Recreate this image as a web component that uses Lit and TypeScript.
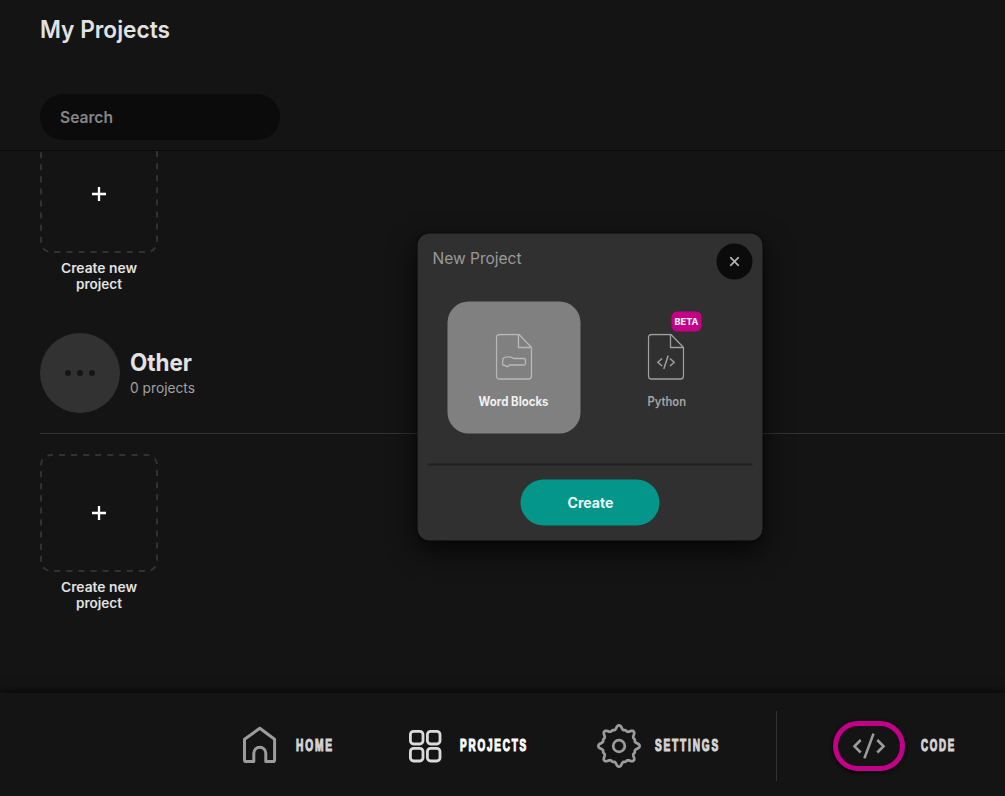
import { LitElement, html, css, svg } from "lit";
import { customElement, property } from "lit/decorators.js";

@customElement("fit-text")
class FitText extends LitElement {
  @property() text = "";
  @property({ type: Number }) width = 50;
  @property({ type: Number }) size = 16;
  @property({ type: Number }) weight = 400;
  static styles = css`
    :host { display: block; }
    svg { display: block; overflow: visible; }
    text { fill: currentColor; }
  `;
  render() {
    return html`<svg width=${this.width} height=${this.size}>
      <text x="0" y=${this.size * 0.86} font-size=${this.size} font-weight=${this.weight}
        textLength=${this.width} lengthAdjust="spacingAndGlyphs">${this.text}</text>
    </svg>`;
  }
}

@customElement("new-card")
class NewCard extends LitElement {
  static styles = css`
    :host { display: flex; flex-direction: column; width: 118px; }
    svg { display: block; }
    .label { display: flex; flex-direction: column; align-items: center; margin-top: 9px; gap: 3px; color: #e2e2e2; }
  `;
  render() {
    return html`
      <svg width="118" height="118" viewBox="0 0 118 118" fill="none">
        <rect x="1" y="1" width="116" height="116" rx="10" stroke="#323232" stroke-width="2" stroke-dasharray="6.038 6.038" stroke-dashoffset="-8" />
        <path d="M59 52V66M52 59H66" stroke="#fff" stroke-width="2.3" />
      </svg>
      <div class="label">
        <fit-text text="Create new" .width=${76} .size=${13} .weight=${600}></fit-text>
        <fit-text text="project" .width=${46} .size=${13} .weight=${600}></fit-text>
      </div>
    `;
  }
}

const fileOutline = svg`
  <path d="M4.5 1H23.5L36 14V42.5Q36 45.5 33 45.5H4Q1 45.5 1 42.5V4Q1 1 4.5 1Z" />
  <path d="M23 1V14H36" />`;

const gearPath = (() => {
  const pts: string[] = [];
  for (let deg = 0; deg < 360; deg += 1.5) {
    const off = ((deg + 22.5) % 45) - 22.5;
    const r = 16.3 + 4.3 * Math.exp(-Math.pow(Math.abs(off) / 9.5, 2.6)) + 0.7 * Math.exp(-Math.pow((22.5 - Math.abs(off)) / 5, 2));
    const t = (deg * Math.PI) / 180;
    pts.push(`${(22 + r * Math.cos(t)).toFixed(2)} ${(22 + r * Math.sin(t)).toFixed(2)}`);
  }
  return "M" + pts.join("L") + "Z";
})();

@customElement("app-root")
class AppRoot extends LitElement {
  static styles = css`
    :host {
      display: flex; flex-direction: column; position: relative; width: 100%; height: 796px;
      overflow: hidden; background: #141414; color: #e2e2e2; font-family: Inter, sans-serif;
    }
    svg { display: block; flex: none; }
    header { box-sizing: border-box; height: 151px; padding: 17px 0 0 40px; border-bottom: 1px solid #0b0b0b; flex: none; }
    .search {
      box-sizing: border-box; width: 240px; height: 46px; border-radius: 23px; background: #0b0b0b;
      margin-top: 53px; padding-left: 20px; display: flex; align-items: center; color: #868686;
    }
    main { flex: 1; min-height: 0; overflow: hidden; padding-left: 40px; }
    .list { margin-top: -16px; }
    .group { display: flex; align-items: center; gap: 10px; height: 80px; padding-bottom: 20px; margin: 42px 0 20px; border-bottom: 1px solid #323232; }
    .avatar { width: 80px; height: 80px; border-radius: 50%; background: #323232; display: flex; align-items: center; justify-content: center; gap: 6px; }
    .dot { width: 6px; height: 6px; border-radius: 50%; background: #151515; }
    .names { display: flex; flex-direction: column; gap: 7px; margin-top: -2px; }
    .sub { color: #a0a0a0; }
    nav {
      flex: none; box-sizing: border-box; height: 103px; background: #141414; box-shadow: 0 0 10px #000;
      display: flex; align-items: center; padding: 3px 0 0 242px; color: #dadada; z-index: 1;
    }
    .item { display: flex; align-items: center; color: #d5d5d5; }
    .item.on { color: #fff; }
    .item.home { gap: 18px; margin-right: 75px; }
    .item.home svg { margin-top: -2px; }
    .item.proj { gap: 18px; margin-right: 69px; }
    .item.set { gap: 14px; margin-right: 56px; }
    .item.code { gap: 16px; margin-left: 56px; }
    .bar { width: 1px; height: 70px; background: #323232; }
    .pill { box-sizing: border-box; width: 72px; height: 50px; border: 5px solid #c40088; border-radius: 25px; display: grid; place-items: center; box-shadow: 0 1px 4px #000; }
    .modal {
      position: absolute; z-index: 2; left: 418px; top: 234px; box-sizing: border-box; width: 345px; height: 307px;
      border-radius: 12px; background: #303030; box-shadow: 0 10px 28px #000b, 0 0 2px #0008; transform: translate(-0.5px, -0.5px);
      display: flex; flex-direction: column; padding: 9.5px 10px 15px;
    }
    .top { display: flex; justify-content: space-between; padding-left: 5px; color: #9a9a9a; }
    .title { padding-top: 7px; }
    .close { width: 36.5px; height: 36.5px; border-radius: 50%; background: #0b0b0b; display: grid; place-items: center; }
    .choices { display: flex; gap: 20px; padding: 22px 20px 0; }
    .choice { position: relative; width: 133px; height: 132px; border-radius: 21px; display: flex; flex-direction: column; align-items: center; box-sizing: border-box; padding-top: 32px; gap: 14.5px; color: #a6a6a6; }
    .choice.on { background: #808080; color: #f0f0f0; }
    .beta { position: absolute; left: 71px; top: 10px; width: 30.5px; height: 19.5px; border-radius: 5.5px; background: #c40088; color: #fff; display: grid; place-items: center; }
    .rule { height: 2px; background: #212121; margin-top: 29.5px; }
    .create { width: 139.5px; height: 46px; border-radius: 23px; background: #04968a; color: #ecfaf8; display: grid; place-items: center; margin: 14.5px auto 0; }
    .condensed { font-family: "Liberation Sans", sans-serif; stroke: currentColor; stroke-width: 1.2px; letter-spacing: 3px; margin-top: -1px; }
  `;

  render() {
    return html`
      <header>
        <fit-text text="My Projects" .width=${130} .size=${24} .weight=${600}></fit-text>
        <div class="search"><fit-text text="Search" .width=${53} .size=${16} .weight=${600}></fit-text></div>
      </header>
      <main>
        <div class="list">
          <new-card></new-card>
          <div class="group">
            <div class="avatar"><span class="dot"></span><span class="dot"></span><span class="dot"></span></div>
            <div class="names">
              <fit-text text="Other" .width=${62} .size=${24} .weight=${700}></fit-text>
              <fit-text class="sub" text="0 projects" .width=${65} .size=${14} .weight=${400}></fit-text>
            </div>
          </div>
          <new-card></new-card>
        </div>
      </main>
      <nav>
        <div class="item home">
          <svg width="36" height="38" viewBox="0 0 36 38" fill="none" stroke="#9c9c9c" stroke-width="3" stroke-linejoin="round">
            <path d="M17.8 2.3L32.6 13.3V34Q32.6 35.6 31 35.6H23.8V27.2A6 6 0 0 0 11.8 27.2V35.6H4Q2.5 35.6 2.5 34V13.3Z" />
          </svg>
          <fit-text class="condensed" text="HOME" .width=${38} .size=${16.5} .weight=${700}></fit-text>
        </div>
        <div class="item on proj">
          <svg width="33" height="33" viewBox="0 0 33 33" fill="none" stroke="#dadada" stroke-width="2.8">
            <rect x="1.4" y="1.4" width="12.6" height="12.6" rx="3.2" /><rect x="18.4" y="1.4" width="12.6" height="12.6" rx="3.2" />
            <rect x="1.4" y="18.4" width="12.6" height="12.6" rx="3.2" /><rect x="18.4" y="18.4" width="12.6" height="12.6" rx="3.2" />
          </svg>
          <fit-text class="condensed" text="PROJECTS" .width=${68} .size=${16.5} .weight=${700}></fit-text>
        </div>
        <div class="item set">
          <svg width="44" height="44" viewBox="0 0 44 44" fill="none" stroke="#9c9c9c" stroke-width="2.7" stroke-linejoin="round">
            <path d=${gearPath} /><circle cx="22" cy="22" r="5.8" />
          </svg>
          <fit-text class="condensed" text="SETTINGS" .width=${65} .size=${16.5} .weight=${700}></fit-text>
        </div>
        <div class="bar"></div>
        <div class="item code">
          <div class="pill">
            <svg width="34" height="28" viewBox="0 0 34 28" fill="none" stroke="#9c9c9c" stroke-width="2.6">
              <path d="M8.7 8L2.5 14.3L8.7 20.5M25.3 8L31.5 14.3L25.3 20.5M21.5 1.6L12.4 26.4" />
            </svg>
          </div>
          <fit-text class="condensed" text="CODE" .width=${35} .size=${16.5} .weight=${700}></fit-text>
        </div>
      </nav>
      <section class="modal">
        <div class="top">
          <fit-text class="title" text="New Project" .width=${89} .size=${16} .weight=${400}></fit-text>
          <div class="close">
            <svg width="10" height="10" viewBox="0 0 10 10"><path d="M.7 .7L9.3 9.3M9.3 .7L.7 9.3" stroke="#b4b4b4" stroke-width="1.7" /></svg>
          </div>
        </div>
        <div class="choices">
          <div class="choice on">
            <svg width="37" height="47" viewBox="0 0 37 47" fill="none" stroke="#b8b8b8" stroke-width="1.3" stroke-linejoin="round">
              ${fileOutline}
              <path d="M7.5 25Q9 23.3 13 23.3Q16.5 23.3 18.5 25H28.5Q30 25 30 26.5V30Q30 31.5 28.5 31.5H14Q13.5 33 11.8 33Q10.5 33 9.5 32Q7 32 7 30Z" />
            </svg>
            <fit-text text="Word Blocks" .width=${70} .size=${12.5} .weight=${700}></fit-text>
          </div>
          <div class="choice">
            <svg width="37" height="47" viewBox="0 0 37 47" fill="none" stroke="#a0a0a0" stroke-width="1.3" stroke-linejoin="round">
              ${fileOutline}
              <path d="M14.6 25L10.3 28.8L14.6 32.5M22.4 25L26.8 28.8L22.4 32.5M20.7 22L16.3 35.6" stroke-width="1.5" />
            </svg>
            <fit-text text="Python" .width=${38.5} .size=${12.5} .weight=${600}></fit-text>
            <span class="beta"><fit-text text="BETA" .width=${24} .size=${9.5} .weight=${700}></fit-text></span>
          </div>
        </div>
        <div class="rule"></div>
        <div class="create"><fit-text text="Create" .width=${46} .size=${14} .weight=${700}></fit-text></div>
      </section>
    `;
  }
}
